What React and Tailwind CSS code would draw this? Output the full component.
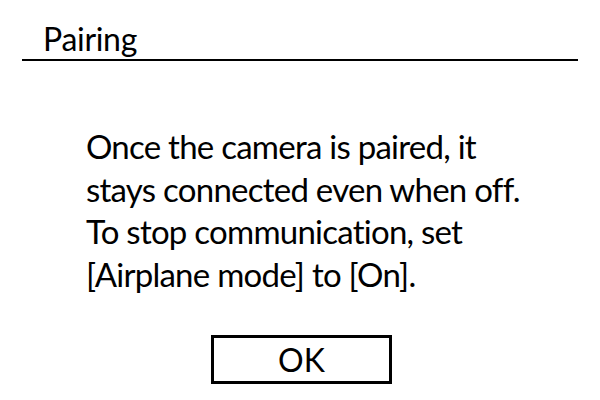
export default function App() {
  return (
    <div
      className="w-[600px] h-[400px] bg-white text-black flex flex-col [font-variant-ligatures:none]"
      style={{ fontFamily: 'Lato, "Open Sans", sans-serif' }}
    >
      {/* Title bar */}
      <div className="mx-[22px] mt-[20px] border-b-2 border-black pl-[21px] pb-[2px]">
        <h1 className="text-[32px] leading-[37px] tracking-[-0.3px]">Pairing</h1>
      </div>

      {/* Message */}
      <p className="mt-[64px] pl-[86px] text-[33px] leading-[42.5px] tracking-[-0.75px]">
        Once the camera is paired, it
        <br />
        stays connected even when off.
        <br />
        To stop communication, set
        <br />
        [Airplane mode] to [On].
      </p>

      {/* Confirm */}
      <div className="flex justify-center mt-[40px]">
        <button className="w-[181px] h-[49px] border-[3px] border-black text-[32px] leading-none ml-[3px]">
          OK
        </button>
      </div>
    </div>
  );
}
